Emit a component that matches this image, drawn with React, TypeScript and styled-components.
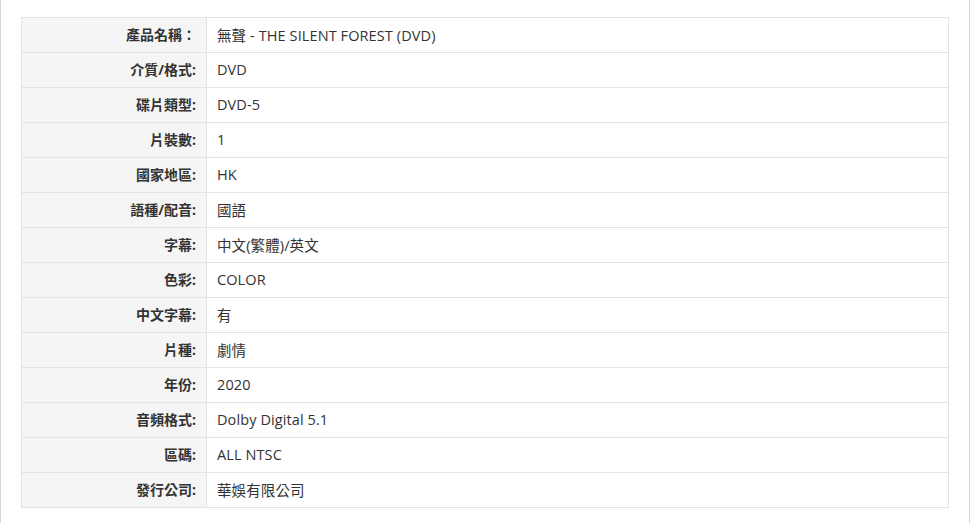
import { createGlobalStyle } from 'styled-components';
import styled from 'styled-components';

const GlobalStyle = createGlobalStyle`
  html, body {
    margin: 0;
    padding: 0;
    background: #fff;
  }
  body {
    font-family: 'Open Sans', 'Noto Sans CJK TC', sans-serif;
    color: #333;
  }
`;

const Page = styled.div`
  box-sizing: border-box;
  width: 970px;
  min-height: 100vh;
  padding: 17px 20px 16px;
  border-left: 1px solid #d6d6d6;
  border-right: 1px solid #d6d6d6;
`;

const Table = styled.table`
  width: 100%;
  border-collapse: collapse;
  font-size: 14px;
`;

const Row = styled.tr`
  height: 35px;
`;

const Label = styled.th`
  width: 164px;
  padding: 0 10px 2px;
  text-align: right;
  font-weight: bold;
  color: #333;
  background: #f5f5f5;
  border: 1px solid #e3e3e3;
`;

const Value = styled.td`
  padding: 0 10px 2px;
  text-align: left;
  font-size: 14.5px;
  letter-spacing: 0.1px;
  color: #333;
  border: 1px solid #e3e3e3;
`;

const specs: [string, string][] = [
  ['產品名稱：', '無聲 - THE SILENT FOREST (DVD)'],
  ['介質/格式:', 'DVD'],
  ['碟片類型:', 'DVD-5'],
  ['片裝數:', '1'],
  ['國家地區:', 'HK'],
  ['語種/配音:', '國語'],
  ['字幕:', '中文(繁體)/英文'],
  ['色彩:', 'COLOR'],
  ['中文字幕:', '有'],
  ['片種:', '劇情'],
  ['年份:', '2020'],
  ['音頻格式:', 'Dolby Digital 5.1'],
  ['區碼:', 'ALL NTSC'],
  ['發行公司:', '華娛有限公司'],
];

export default function App() {
  return (
    <>
      <GlobalStyle />
      <Page>
        <Table>
          <tbody>
            {specs.map(([label, value]) => (
              <Row key={label}>
                <Label>{label}</Label>
                <Value>{value}</Value>
              </Row>
            ))}
          </tbody>
        </Table>
      </Page>
    </>
  );
}
